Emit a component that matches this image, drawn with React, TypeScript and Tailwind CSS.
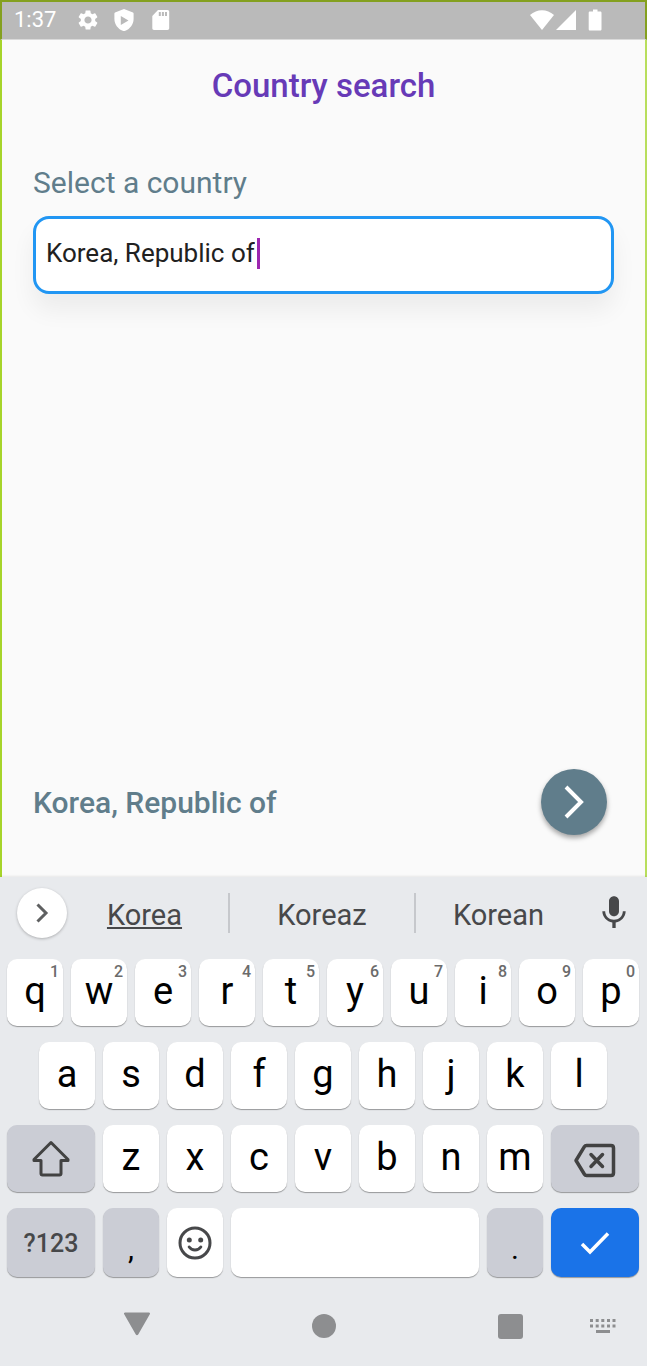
import { useState } from "react";
import type { ReactNode } from "react";
import { MdMic, MdSettings } from "react-icons/md";

const topRow = ["q", "w", "e", "r", "t", "y", "u", "i", "o", "p"];
const homeRow = ["a", "s", "d", "f", "g", "h", "j", "k", "l"];
const bottomRow = ["z", "x", "c", "v", "b", "n", "m"];

const keyBase =
  "relative flex h-[67px] items-center justify-center rounded-[10px] shadow-[0_1px_1px_rgba(0,0,0,0.35)]";

function LetterKey({ letter, hint, className = "col-span-2" }: { letter: string; hint?: string; className?: string }) {
  return (
    <button type="button" className={`${keyBase} bg-white pb-1 text-[38px] leading-none text-black ${className}`}>
      {letter}
      {hint && <span className="absolute top-[5px] right-1 text-base leading-4 font-medium text-[#6b6b6b]">{hint}</span>}
    </button>
  );
}

function ActionKey({ label, className, children }: { label: string; className: string; children?: ReactNode }) {
  return (
    <button type="button" aria-label={label} className={`${keyBase} ${className}`}>
      {children}
    </button>
  );
}

function StatusBar() {
  return (
    <header className="flex h-10 items-center justify-between border-2 border-b border-[#84a01f] border-b-[#dadada] bg-[#bababa] pr-10 pb-px pl-3 text-white">
      <div className="flex items-center">
        <span className="w-[62px] text-[22px] leading-none">1:37</span>
        <MdSettings className="size-6" aria-hidden="true" />
        <svg className="ml-3 size-6" viewBox="0 0 24 24" fill="none" aria-hidden="true">
          <path
            fill="currentColor"
            fillRule="evenodd"
            d="M12 1 21 4.6c.4.2.6.5.6.9v5.6c0 5.2-3.5 10-8.3 11.700-.9.3-1.700.3-2.600 0C5.900 21.100 2.400 16.300 2.400 11.100V5.500c0-.4.2-.7.600-.9L12 1Zm-3.200 7v9l7.700-4.500L8.800 8Z"
          />
        </svg>
        <svg className="ml-3 size-6" viewBox="0 0 24 24" fill="none" aria-hidden="true">
          <path
            fill="currentColor"
            d="M10 2h9.500c1 0 1.700.8 1.700 1.700v16.600c0 1-.8 1.700-1.700 1.700H6c-1 0-1.700-.8-1.700-1.700V8L10 2Z"
          />
          <path fill="#bababa" d="M10.800 4h2v4h-2zM13.900 4h2v4h-2zM17 4h2v4h-2z" />
        </svg>
      </div>
      <div className="flex items-center">
        <svg className="h-6 w-[26px]" viewBox="0 0 26 24" aria-hidden="true">
          <path fill="currentColor" d="M1 7c7-6.300 17-6.300 24 0L13 22 1 7Z" />
        </svg>
        <svg className="h-6 w-[22px]" viewBox="0 0 22 24" aria-hidden="true">
          <path fill="currentColor" d="M21 2v20H1L21 2Z" />
        </svg>
        <svg className="ml-2 h-6 w-5" viewBox="0 0 20 24" aria-hidden="true">
          <path
            fill="currentColor"
            d="M8 1.500h4.500v2h2.700c.8 0 1.300.5 1.300 1.300v16.400c0 .8-.5 1.300-1.300 1.300H5c-.8 0-1.300-.5-1.300-1.300V4.800c0-.8.5-1.300 1.300-1.300h3v-2Z"
          />
        </svg>
      </div>
    </header>
  );
}

export default function App() {
  const [country, setCountry] = useState("Korea, Republic of");

  return (
    <div className="flex min-h-screen flex-col bg-[#e8eaed] font-['Roboto',sans-serif]">
      <StatusBar />

      <main className="flex flex-1 flex-col border-r-2 border-l-2 border-r-[#b8de5c] border-l-[#a6d42a] bg-[#fafafa] px-[31px]">
        <h1 className="mt-7 text-center text-[33px] leading-9 font-medium text-[#673ab7]">Country search</h1>
        <label htmlFor="country" className="mt-[61px] text-[30px] leading-9 text-[#607d8b]">
          Select a country
        </label>
        <div className="mt-[15px] flex h-[78px] items-center rounded-2xl border-[3px] border-[#2196f3] bg-white px-[10px] pb-1 shadow-[0_16px_24px_rgba(0,0,0,0.06)]">
          <input
            id="country"
            type="text"
            value={country}
            onChange={(event) => setCountry(event.target.value)}
            className="field-sizing-content max-w-full bg-transparent text-[26px] leading-8 text-[#212121] caret-transparent outline-none"
          />
          <span className="ml-0.5 h-[31px] w-[3px] bg-[#9c27b0]" aria-hidden="true" />
        </div>

        <div className="mt-auto mb-[42px] flex items-center justify-between pr-[7px]">
          <output htmlFor="country" className="pt-0.5 text-[30px] leading-9 font-medium text-[#607d8b]">
            {country}
          </output>
          <button
            type="button"
            aria-label="Next"
            className="flex size-[66px] items-center justify-center rounded-full bg-[#607d8b] text-white shadow-[0_3px_5px_rgba(0,0,0,0.35)]"
          >
            <svg className="h-9 w-6" viewBox="0 0 24 36" fill="none" stroke="currentColor" strokeWidth="4" aria-hidden="true">
              <path d="m4 3 15 15L4 33" />
            </svg>
          </button>
        </div>
      </main>

      <section aria-label="Keyboard" className="shadow-[0_-1px_2px_rgba(0,0,0,0.08)]">
        <div className="grid h-[72px] grid-cols-[67px_161fr_188fr_165fr_66px] items-center text-[29px] text-[#47484a]">
          <button
            type="button"
            aria-label="Expand toolbar"
            className="ml-[17px] flex size-[50px] items-center justify-center rounded-full bg-white text-[#5f6061] shadow-[0_1px_3px_rgba(0,0,0,0.25)]"
          >
            <svg className="size-6" viewBox="0 0 24 24" fill="none" stroke="currentColor" strokeWidth="3" aria-hidden="true">
              <path d="m7.500 3.500 8.500 8.500-8.500 8.500" />
            </svg>
          </button>
          <button type="button" className="h-10 pt-0.5 pr-1.5 leading-10 underline decoration-2 underline-offset-2">Korea</button>
          <button type="button" className="h-10 border-x-2 border-[#c6c8cc] pt-0.5 leading-10">Koreaz</button>
          <button type="button" className="h-10 pt-0.5 leading-10">Korean</button>
          <button type="button" aria-label="Voice input" className="flex justify-center">
            <MdMic className="size-10" />
          </button>
        </div>

        <div className="mt-[10px] grid grid-cols-20 gap-x-2 gap-y-4 pr-2 pl-[7px]">
          {topRow.map((letter, index) => (
            <LetterKey key={letter} letter={letter} hint={String((index + 1) % 10)} />
          ))}

          {homeRow.map((letter, index) => (
            <LetterKey key={letter} letter={letter} className={index === 0 ? "col-span-2 col-start-2" : "col-span-2"} />
          ))}

          <ActionKey label="Shift" className="col-span-3 col-start-1 bg-[#cbcdd5] text-[#424242]">
            <svg className="size-10" viewBox="0 0 40 40" fill="none" stroke="currentColor" strokeWidth="3" strokeLinejoin="round" aria-hidden="true">
              <path d="M20 3.500 37 20.500v1h-7V34.500c0 1-.5 1.500-1.500 1.500h-17c-1 0-1.500-.5-1.500-1.500V21.500H3v-1L20 3.500Z" />
            </svg>
          </ActionKey>
          {bottomRow.map((letter) => (
            <LetterKey key={letter} letter={letter} />
          ))}
          <ActionKey label="Delete" className="col-span-3 bg-[#cbcdd5] pt-0.5 text-[#424242]">
            <svg className="h-9 w-11" viewBox="0 0 44 36" fill="none" stroke="currentColor" strokeWidth="3.500" strokeLinejoin="round" aria-hidden="true">
              <path d="M13.500 3.500H38c1.700 0 2.500.8 2.500 2.500v25c0 1.700-.8 2.500-2.500 2.500H13.500c-1 0-1.600-.4-2.100-1.200L3 18.500l8.400-13.800c.5-.8 1.100-1.200 2.100-1.200Z" />
              <path strokeLinecap="round" d="m18 12.500 11.500 12m0-12-11.500 12" />
            </svg>
          </ActionKey>

          <button type="button" className={`${keyBase} col-span-3 h-[69px]! bg-[#cbcdd5] pt-0.5 text-[25px] font-medium text-[#47484a]`}>
            ?123
          </button>
          <button type="button" className={`${keyBase} col-span-2 h-[69px]! bg-[#cbcdd5] pt-3 text-[30px] text-black`}>
            ,
          </button>
          <ActionKey label="Emoji" className="col-span-2 h-[69px]! bg-white text-[#47484a]">
            <svg className="size-9" viewBox="0 0 36 36" fill="none" stroke="currentColor" strokeWidth="3" aria-hidden="true">
              <circle cx="18" cy="18" r="15" />
              <circle cx="12.300" cy="15" r="2.500" fill="currentColor" stroke="none" />
              <circle cx="23.700" cy="15" r="2.500" fill="currentColor" stroke="none" />
              <path strokeLinecap="round" d="M12.200 22c2.800 4 8.800 4 11.600 0" />
            </svg>
          </ActionKey>
          <ActionKey label="Space" className="col-span-8 h-[69px]! bg-white" />
          <button type="button" className={`${keyBase} col-span-2 h-[69px]! bg-[#cbcdd5] pt-3 text-[30px] text-black`}>
            .
          </button>
          <ActionKey label="Done" className="col-span-3 h-[69px]! bg-[#1a73e8] text-white">
            <svg className="h-6 w-8" viewBox="0 0 32 24" fill="none" stroke="currentColor" strokeWidth="3.500" aria-hidden="true">
              <path d="m3 13 8 8L29 2.500" />
            </svg>
          </ActionKey>
        </div>

        <nav aria-label="System" className="grid h-[89px] grid-cols-[230fr_187fr_186fr_44fr] items-center pt-[9px] text-[#8d8e90]">
          <button type="button" aria-label="Back" className="flex justify-center pb-1 pl-11">
            <svg className="size-7" viewBox="0 0 28 28" fill="currentColor" aria-hidden="true">
              <path d="M2.200 2.500h23.600c1.200 0 1.500.9 1 1.700L15.200 24.500c-.7 1-1.700 1-2.400 0L1.200 4.200c-.5-.8-.2-1.700 1-1.700Z" />
            </svg>
          </button>
          <button type="button" aria-label="Home" className="flex justify-center">
            <span className="size-6 rounded-full bg-current" />
          </button>
          <button type="button" aria-label="Recent apps" className="flex justify-center">
            <span className="size-[25px] rounded-[3px] bg-current" />
          </button>
          <button type="button" aria-label="Switch keyboard" className="-ml-11 flex justify-center">
            <svg className="h-4 w-[26px]" viewBox="0 0 26 16" fill="currentColor" aria-hidden="true">
              <path d="M0 1h3v3H0zM5.700 1h3v3h-3zM11.300 1h3v3h-3zM17 1h3v3h-3zM22.500 1h3v3h-3zM0 6.500h3v3H0zM5.700 6.500h3v3h-3zM11.300 6.500h3v3h-3zM17 6.500h3v3h-3zM22.500 6.500h3v3h-3zM6 12h14v3H6z" />
            </svg>
          </button>
        </nav>
      </section>
    </div>
  );
}
